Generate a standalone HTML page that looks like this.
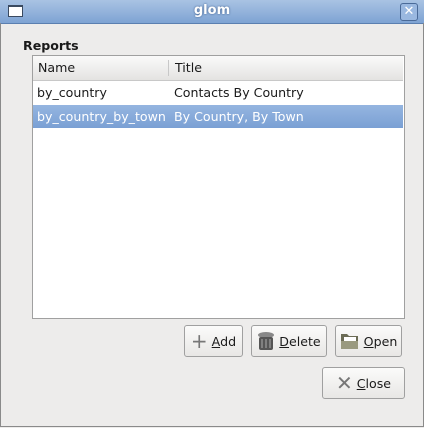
<!DOCTYPE html><html><head><style>
body{margin:0;width:424px;height:428px;overflow:hidden;background:#edeceb;font-family:"DejaVu Sans","Liberation Sans",sans-serif;font-size:12.6px;color:#1a1a1a;position:relative}
.abs{position:absolute}
#tb{left:0;top:0;width:424px;height:23px;background:linear-gradient(#a9c3e3,#7ea3d3);border-bottom:1px solid #5b7fb0}
#win{left:0;top:23px;width:422px;height:403px;border:1px solid #8a8a8a;border-top:none}
.btn{position:absolute;border:1px solid #a0a0a0;border-radius:3px;background:linear-gradient(#fbfbfa,#e8e7e5);box-sizing:border-box;display:flex;align-items:center;justify-content:center;gap:4px}
u{text-decoration:underline}
</style></head><body>
<div id="tb" class="abs"></div>
<div class="abs" style="left:8px;top:5px;width:13px;height:9px;border:1px solid #3a4a60;background:#fff;border-top-width:2px"></div>
<div class="abs" style="left:0;top:3px;width:424px;text-align:center;color:#fff;font-size:13px;font-weight:bold;text-shadow:0 0 2px #3a5a8a">glom</div>
<div class="abs" style="left:400px;top:3px;width:16px;height:16px;border:1px solid #4a6a98;border-radius:3px;background:#9ab8e0;color:#fff;font-size:13px;line-height:16px;text-align:center">✕</div>
<div id="win" class="abs"></div>
<div class="abs" style="left:23px;top:38px;font-weight:bold">Reports</div>
<div class="abs" style="left:32px;top:55px;width:371px;height:262px;border:1px solid #a0a0a0;background:#fff"></div>
<div class="abs" style="left:33px;top:56px;width:370px;height:24px;background:linear-gradient(#fafafa,#e4e3e1);border-bottom:1px solid #c8c8c8"></div>
<div class="abs" style="left:168px;top:60px;width:1px;height:16px;background:#c8c8c8"></div>
<div class="abs" style="left:38px;top:60px">Name</div>
<div class="abs" style="left:175px;top:60px">Title</div>
<div class="abs" style="left:37px;top:85px">by_country</div>
<div class="abs" style="left:174px;top:85px">Contacts By Country</div>
<div class="abs" style="left:33px;top:105px;width:370px;height:23px;background:linear-gradient(#95b5e0,#7aa0d4)"></div>
<div class="abs" style="left:37px;top:109px;color:#fff">by_country_by_town</div>
<div class="abs" style="left:174px;top:109px;color:#fff">By Country, By Town</div>
<div class="btn" style="left:184px;top:325px;width:59px;height:32px"><span style="font-size:20px;color:#777">+</span><span><u>A</u>dd</span></div>
<div class="btn" style="left:251px;top:325px;width:76px;height:32px"><svg width="18" height="20"><ellipse cx="9" cy="4" rx="8" ry="3" fill="#888"/><rect x="2" y="6" width="14" height="13" rx="2" fill="#555"/><path d="M5 8v9M9 8v9M13 8v9" stroke="#aaa"/></svg><span><u>D</u>elete</span></div>
<div class="btn" style="left:335px;top:325px;width:67px;height:32px"><svg width="20" height="18"><path d="M1 2h6l2 2h9v13H1z" fill="#6b6b55"/><rect x="4" y="5" width="12" height="8" fill="#fff"/><path d="M1 9h17v8H1z" fill="#9a9a80"/></svg><span><u>O</u>pen</span></div>
<div class="btn" style="left:322px;top:367px;width:83px;height:32px"><span style="font-size:20px;color:#777;font-weight:bold">✕</span><span><u>C</u>lose</span></div>
</body></html>
